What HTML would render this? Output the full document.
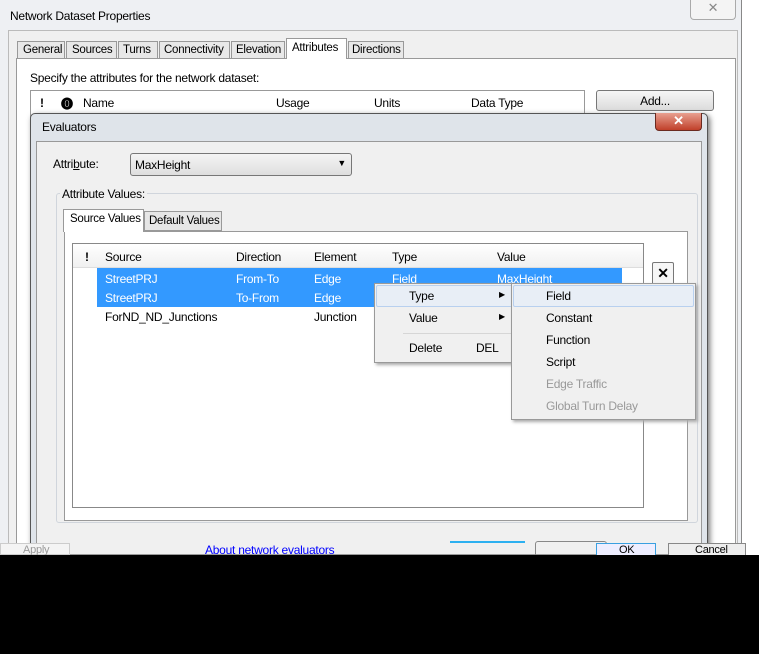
<!DOCTYPE html>
<html><head><style>
*{box-sizing:border-box}
body{margin:0;width:759px;height:654px;background:#000;position:relative;overflow:hidden;font-family:"Liberation Sans",sans-serif;font-size:12px;letter-spacing:-0.25px;color:#000}
.a{position:absolute}
.t{position:absolute;white-space:nowrap}
</style></head><body>
<div class="a" style="left:0;top:0;width:759px;height:555px;background:#fff"></div>
<div class="a" style="left:0;top:0;width:742px;height:555px;background:#eef0f3;border-right:1px solid #888"></div>
<div class="t" style="left:10px;top:9px;font-size:12px">Network Dataset Properties</div>
<div class="a" style="left:690px;top:0;width:46px;height:20px;border:1px solid #aaa;border-top:none;border-radius:0 0 4px 4px;background:#f4f4f4;text-align:center;color:#888;font-size:13px">✕</div>
<div class="a" style="left:8px;top:30px;width:730px;height:525px;background:#f0f0f0;border:1px solid #bbb"></div>
<div class="a" style="left:16px;top:58px;width:720px;height:497px;background:#fff;border:1px solid #999"></div>
<div class="t" style="left:17px;top:41px;width:48px;height:18px;border:1px solid #999;background:#e8e8e8;padding:2px 0 0 5px;font-size:11.5px">General</div>
<div class="t" style="left:66px;top:41px;width:51px;height:18px;border:1px solid #999;background:#e8e8e8;padding:2px 0 0 5px;font-size:11.5px">Sources</div>
<div class="t" style="left:118px;top:41px;width:40px;height:18px;border:1px solid #999;background:#e8e8e8;padding:2px 0 0 4px;font-size:11.5px">Turns</div>
<div class="t" style="left:159px;top:41px;width:71px;height:18px;border:1px solid #999;background:#e8e8e8;padding:2px 0 0 4px;font-size:11.5px">Connectivity</div>
<div class="t" style="left:231px;top:41px;width:54px;height:18px;border:1px solid #999;background:#e8e8e8;padding:2px 0 0 4px;font-size:11.5px">Elevation</div>
<div class="t" style="left:286px;top:38px;width:61px;height:21px;border:1px solid #999;border-bottom:none;background:#fff;padding:3px 0 0 5px;font-size:11.5px">Attributes</div>
<div class="t" style="left:348px;top:41px;width:56px;height:18px;border:1px solid #999;background:#e8e8e8;padding:2px 0 0 3px;font-size:11.5px">Directions</div>
<div class="t" style="left:30px;top:71px">Specify the attributes for the network dataset:</div>
<div class="a" style="left:30px;top:90px;width:555px;height:30px;border:1px solid #999;background:#fff"></div>
<div class="t" style="left:40px;top:96px;font-weight:bold">!</div>
<div class="t" style="left:61px;top:95px;font-weight:bold">⓿</div>
<div class="t" style="left:83px;top:96px">Name</div>
<div class="t" style="left:276px;top:96px">Usage</div>
<div class="t" style="left:374px;top:96px">Units</div>
<div class="t" style="left:471px;top:96px">Data Type</div>
<div class="a" style="left:596px;top:90px;width:118px;height:21px;border:1px solid #777;border-radius:3px;background:linear-gradient(#f6f6f6,#dcdcdc);text-align:center;padding-top:3px">Add...</div>
<div class="a" style="left:30px;top:113px;width:678px;height:442px;background:#dfe4ea;border:1px solid #555;border-radius:5px 5px 0 0;box-shadow:2px 2px 6px #777"></div>
<div class="t" style="left:42px;top:120px">Evaluators</div>
<div class="a" style="left:655px;top:113px;width:47px;height:18px;background:linear-gradient(#e8a090,#c0402a);border:1px solid #6a2a20;border-top:none;border-radius:0 0 4px 4px;color:#fff;text-align:center;font-weight:bold;font-size:13px">✕</div>
<div class="a" style="left:36px;top:141px;width:666px;height:414px;background:#f0f0f0;border:1px solid #999"></div>
<div class="t" style="left:53px;top:157px">Attri<u>b</u>ute:</div>
<div class="a" style="left:130px;top:153px;width:222px;height:23px;border:1px solid #777;border-radius:3px;background:linear-gradient(#f4f4f4,#dedede);padding:4px 0 0 4px">MaxHeight<span style="position:absolute;right:5px;top:4px;font-size:9px">▼</span></div>
<div class="a" style="left:56px;top:193px;width:642px;height:330px;border:1px solid #d0d5dc;border-radius:3px"></div>
<div class="t" style="left:60px;top:187px;background:#f0f0f0;padding:0 2px">Attribute Values:</div>
<div class="a" style="left:64px;top:231px;width:624px;height:290px;background:#fff;border:1px solid #999"></div>
<div class="t" style="left:63px;top:209px;width:81px;height:23px;border:1px solid #999;border-bottom:none;background:#fff;padding:3px 0 0 6px;font-size:11.5px">Source Values</div>
<div class="t" style="left:144px;top:211px;width:78px;height:20px;border:1px solid #999;background:#e6e6e6;padding:3px 0 0 4px;font-size:11.5px">Default Values</div>
<div class="a" style="left:72px;top:243px;width:572px;height:265px;border:1px solid #888;background:#fff"></div>
<div class="a" style="left:73px;top:244px;width:570px;height:24px;background:linear-gradient(#fff,#f0f0f0);border-bottom:1px solid #ddd"></div>
<div class="t" style="left:85px;top:250px;font-weight:bold">!</div>
<div class="t" style="left:105px;top:250px">Source</div>
<div class="t" style="left:236px;top:250px">Direction</div>
<div class="t" style="left:314px;top:250px">Element</div>
<div class="t" style="left:392px;top:250px">Type</div>
<div class="t" style="left:497px;top:250px">Value</div>
<div class="a" style="left:97px;top:268px;width:525px;height:39px;background:#3399ff"></div>
<div class="t" style="left:105px;top:272px;color:#fff">StreetPRJ</div>
<div class="t" style="left:236px;top:272px;color:#fff">From-To</div>
<div class="t" style="left:314px;top:272px;color:#fff">Edge</div>
<div class="t" style="left:392px;top:272px;color:#fff">Field</div>
<div class="t" style="left:497px;top:272px;color:#fff">MaxHeight</div>
<div class="t" style="left:105px;top:291px;color:#fff">StreetPRJ</div>
<div class="t" style="left:236px;top:291px;color:#fff">To-From</div>
<div class="t" style="left:314px;top:291px;color:#fff">Edge</div>
<div class="t" style="left:105px;top:310px">ForND_ND_Junctions</div>
<div class="t" style="left:314px;top:310px">Junction</div>
<div class="a" style="left:652px;top:262px;width:22px;height:23px;border:1px solid #777;border-radius:2px;background:#f6f6f6;text-align:center;font-weight:bold;font-size:14px;padding-top:2px">✕</div>
<div class="a" style="left:374px;top:283px;width:142px;height:80px;background:#f0f0f0;border:1px solid #999;box-shadow:2px 2px 3px #aaa"></div>
<div class="a" style="left:376px;top:285px;width:138px;height:22px;border:1px solid #b8d0ef;border-radius:2px;background:#e8eef6"></div>
<div class="t" style="left:409px;top:289px">Type</div><div class="t" style="left:499px;top:290px;font-size:8px">▶</div>
<div class="t" style="left:409px;top:311px">Value</div><div class="t" style="left:499px;top:312px;font-size:8px">▶</div>
<div class="a" style="left:403px;top:333px;width:110px;height:1px;background:#d6d6d6"></div>
<div class="t" style="left:409px;top:341px">Delete</div><div class="t" style="left:476px;top:341px">DEL</div>
<div class="a" style="left:511px;top:283px;width:185px;height:137px;background:#f0f0f0;border:1px solid #999;box-shadow:2px 2px 3px #aaa"></div>
<div class="a" style="left:513px;top:285px;width:181px;height:22px;border:1px solid #b8d0ef;border-radius:2px;background:#e8eef6"></div>
<div class="t" style="left:546px;top:289px">Field</div>
<div class="t" style="left:546px;top:311px">Constant</div>
<div class="t" style="left:546px;top:333px">Function</div>
<div class="t" style="left:546px;top:355px">Script</div>
<div class="t" style="left:546px;top:377px;color:#999">Edge Traffic</div>
<div class="t" style="left:546px;top:399px;color:#999">Global Turn Delay</div>
<div class="t" style="left:205px;top:543px;color:#00f;text-decoration:underline">About network evaluators</div>
<div class="a" style="left:450px;top:541px;width:75px;height:14px;border-top:2px solid #2cb0f0"></div>
<div class="a" style="left:535px;top:541px;width:72px;height:14px;border:1px solid #888;border-bottom:none;border-radius:3px 3px 0 0"></div>
<div class="a" style="left:596px;top:543px;width:60px;height:12px;border:1px solid #3aa0e0;border-bottom:none;background:#eef"></div>
<div class="t" style="left:619px;top:544px;font-size:11px">OK</div>
<div class="a" style="left:668px;top:543px;width:78px;height:12px;border:1px solid #888;border-bottom:none;background:#eee"></div>
<div class="t" style="left:695px;top:544px;font-size:11px">Cancel</div>
<div class="a" style="left:0;top:543px;width:70px;height:12px;border:1px solid #ccc;background:#f4f4f4;color:#999;font-size:11px;padding-left:22px">Apply</div>
<div class="a" style="left:0;top:555px;width:759px;height:99px;background:#000"></div>
</body></html>
